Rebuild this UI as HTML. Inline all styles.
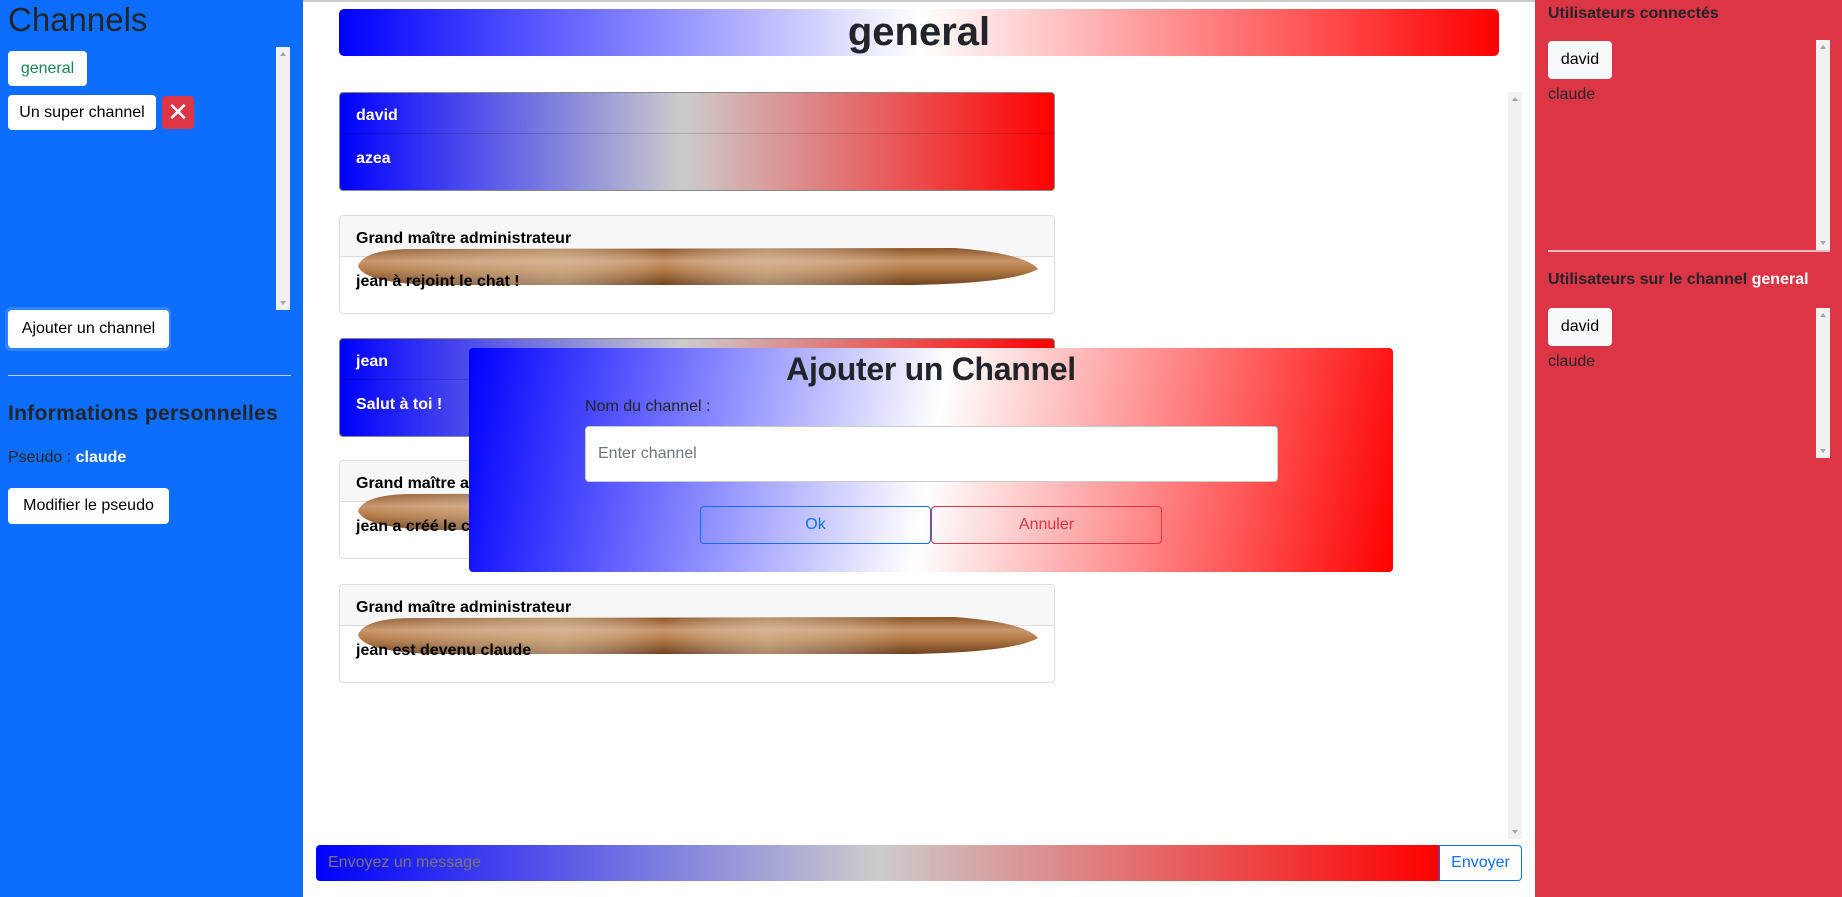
<!DOCTYPE html>
<html><head><meta charset="utf-8"><style>
*{box-sizing:border-box;margin:0;padding:0}
body{width:1842px;height:897px;overflow:hidden;font-family:"Liberation Sans",sans-serif;background:#fff;position:relative;color:#212529}
.abs{position:absolute}
.btn{position:absolute;background:#fff;border-radius:4px;font-size:16px;display:flex;align-items:center;justify-content:center;color:#000}
.sb{position:absolute;background:#f1f1f1}
.sb:before,.sb:after{content:"";position:absolute;left:4px;border-left:3px solid transparent;border-right:3px solid transparent}
.sb:before{top:5px;border-bottom:4px solid #a3a3a3}
.sb:after{bottom:5px;border-top:4px solid #a3a3a3}
.card{position:absolute;left:339px;width:716px;height:99px;border:1px solid #ddd;border-radius:4px;overflow:hidden;font-weight:bold;font-size:16px;color:#000}
.card .h{height:41px;border-bottom:1px solid #ddd;padding:14px 0 0 16px;background:#f7f7f7}
.card .b{padding:16px 0 0 16px}
.card span{position:relative;z-index:2}
.tri{background:linear-gradient(90deg,#00f 0%,#ccc 48%,#f00 100%);color:#fff;border:1px solid #888}
.tri .h{background:transparent;border-bottom:1px solid rgba(0,0,0,.15)}
.bag{position:absolute;z-index:1}
</style></head><body>
<div class="abs" style="left:0;top:0;width:303px;height:897px;background:#0d6efd"></div>
<div class="abs" style="left:303px;top:0;width:1232px;height:2px;background:#ccc"></div>
<div class="abs" style="left:1535px;top:0;width:307px;height:897px;background:#dc3545"></div>

<div class="abs" style="left:8px;top:1px;font-size:33px;color:#212529">Channels</div>
<div class="sb" style="left:276px;top:47px;width:14px;height:263px"></div>
<div class="btn" style="left:8px;top:51px;width:79px;height:35px;color:#198754">general</div>
<div class="btn" style="left:8px;top:95px;width:148px;height:35px">Un super channel</div>
<div class="btn" style="left:162px;top:96px;width:32px;height:33px;background:#dc3545;color:#fff;font-size:26px;font-weight:100">✕</div>
<div class="abs" style="left:5px;top:307px;width:166px;height:44px;border-radius:6px;background:rgba(255,255,255,.15)"></div>
<div class="btn" style="left:8px;top:310px;width:161px;height:38px">Ajouter un channel</div>
<div class="abs" style="left:8px;top:375px;width:283px;height:1px;background:#bcd4fb"></div>
<div class="abs" style="left:8px;top:402px;font-size:21px;font-weight:bold;letter-spacing:.3px">Informations personnelles</div>
<div class="abs" style="left:8px;top:449px;font-size:16px">Pseudo : <b style="color:#fff">claude</b></div>
<div class="btn" style="left:8px;top:488px;width:161px;height:36px">Modifier le pseudo</div>

<div class="abs" style="left:339px;top:9px;width:1160px;height:47px;border-radius:5px;background:linear-gradient(90deg,#00f,#fff 50%,#f00);text-align:center;font-size:40px;font-weight:bold;line-height:47px">general</div>
<div class="sb" style="left:1508px;top:92px;width:14px;height:747px"></div>

<div class="card tri" style="top:92px"><div class="h"><span>david</span></div><div class="b"><span>azea</span></div></div>
<div class="card" style="top:215px"><div class="h"><span>Grand maître administrateur</span></div><div class="b"><span>jean à rejoint le chat !</span></div></div>
<div class="card tri" style="top:338px"><div class="h"><span>jean</span></div><div class="b"><span>Salut à toi !</span></div></div>
<div class="card" style="top:460px"><div class="h"><span>Grand maître administrateur</span></div><div class="b"><span>jean a créé le channel</span></div></div>
<div class="card" style="top:584px"><div class="h"><span>Grand maître administrateur</span></div><div class="b"><span>jean est devenu claude</span></div></div>

<svg width="0" height="0" style="position:absolute"><defs><linearGradient id="g" x1="0" y1="0" x2="0" y2="1"><stop offset="0" stop-color="#8a5428"/><stop offset=".35" stop-color="#c8956a"/><stop offset=".6" stop-color="#b27a45"/><stop offset="1" stop-color="#6e4220"/></linearGradient>
<linearGradient id="h" x1="0" y1="0" x2="1" y2="0"><stop offset="0" stop-color="#fff" stop-opacity="0"/><stop offset=".3" stop-color="#e8d3b8" stop-opacity=".5"/><stop offset=".45" stop-color="#fff" stop-opacity="0"/><stop offset=".6" stop-color="#e8d3b8" stop-opacity=".5"/><stop offset=".8" stop-color="#fff" stop-opacity="0"/></linearGradient></defs></svg>
<svg class="bag" style="left:354px;top:245px" width="686" height="42"><path d="M4 21 Q10 4 60 4 L600 3 Q670 8 684 24 Q660 38 560 40 L80 40 Q10 38 4 21Z" fill="url(#g)"/><path d="M4 21 Q10 4 60 4 L600 3 Q670 8 684 24 Q660 38 560 40 L80 40 Q10 38 4 21Z" fill="url(#h)"/></svg>
<svg class="bag" style="left:354px;top:490px" width="686" height="42"><path d="M4 21 Q10 4 60 4 L600 3 Q670 8 684 24 Q660 38 560 40 L80 40 Q10 38 4 21Z" fill="url(#g)"/><path d="M4 21 Q10 4 60 4 L600 3 Q670 8 684 24 Q660 38 560 40 L80 40 Q10 38 4 21Z" fill="url(#h)"/></svg>
<svg class="bag" style="left:354px;top:614px" width="686" height="42"><path d="M4 21 Q10 4 60 4 L600 3 Q670 8 684 24 Q660 38 560 40 L80 40 Q10 38 4 21Z" fill="url(#g)"/><path d="M4 21 Q10 4 60 4 L600 3 Q670 8 684 24 Q660 38 560 40 L80 40 Q10 38 4 21Z" fill="url(#h)"/></svg>

<div class="abs" style="z-index:5;left:469px;top:348px;width:924px;height:224px;border-radius:4px;background:linear-gradient(100deg,#00f 0%,#fff 50%,#f00 100%)">
 <div style="text-align:center;font-size:32px;margin-top:3px;font-weight:bold;letter-spacing:-.3px">Ajouter un Channel</div>
 <div class="abs" style="left:116px;top:50px;font-size:16px">Nom du channel :</div>
 <div class="abs" style="left:116px;top:78px;width:693px;height:56px;background:#fff;border:1px solid #ccc;border-radius:4px;padding:18px 12px;font-size:16px;color:#6c757d">Enter channel</div>
 <div class="abs" style="left:231px;top:158px;width:231px;height:38px;border:1px solid #0d6efd;border-radius:4px;color:#0d6efd;font-size:16px;text-align:center;line-height:36px">Ok</div>
 <div class="abs" style="left:462px;top:158px;width:231px;height:38px;border:1px solid #dc3545;border-radius:4px;color:#dc3545;font-size:16px;text-align:center;line-height:36px">Annuler</div>
</div>

<div class="abs" style="left:316px;top:845px;width:1123px;height:36px;border-radius:4px 0 0 4px;background:linear-gradient(90deg,#00f,#ccc 50%,#f00);font-size:16px;color:#777;padding:9px 12px">Envoyez un message</div>
<div class="abs" style="left:1439px;top:845px;width:83px;height:36px;border:1px solid #0d6efd;border-radius:0 4px 4px 0;color:#0d6efd;font-size:16px;text-align:center;line-height:34px">Envoyer</div>

<div class="abs" style="left:1548px;top:5px;font-size:16px;font-weight:bold">Utilisateurs connectés</div>
<div class="sb" style="left:1816px;top:40px;width:14px;height:210px"></div>
<div class="btn" style="left:1548px;top:41px;width:64px;height:38px;background:#f8f9fa">david</div>
<div class="abs" style="left:1548px;top:86px;font-size:16px">claude</div>
<div class="abs" style="left:1548px;top:250px;width:282px;height:2px;background:#f3b9bf"></div>
<div class="abs" style="left:1548px;top:271px;font-size:16px;font-weight:bold">Utilisateurs sur le channel <span style="color:#fff">general</span></div>
<div class="sb" style="left:1816px;top:308px;width:14px;height:150px"></div>
<div class="btn" style="left:1548px;top:308px;width:64px;height:38px;background:#f8f9fa">david</div>
<div class="abs" style="left:1548px;top:353px;font-size:16px">claude</div>
</body></html>
